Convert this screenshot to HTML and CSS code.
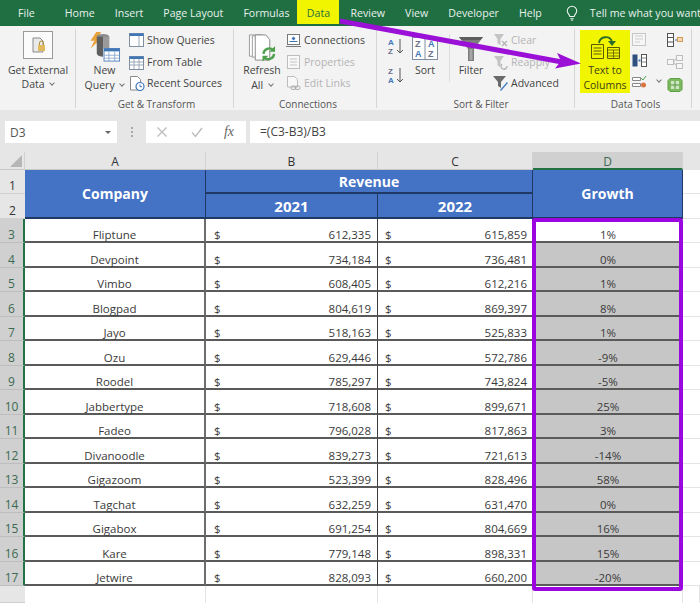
FILE: index.html
```html
<!DOCTYPE html>
<html lang="en">
<head>
<meta charset="utf-8">
<title>Text to Columns</title>
<link rel="stylesheet" href="styles.css">
</head>
<body>
<div class="app">
  <nav class="tabs">
    <span class="tab t-file">File</span>
    <span class="tab">Home</span>
    <span class="tab">Insert</span>
    <span class="tab">Page Layout</span>
    <span class="tab">Formulas</span>
    <span class="tab t-data">Data</span>
    <span class="tab">Review</span>
    <span class="tab">View</span>
    <span class="tab">Developer</span>
    <span class="tab">Help</span>
    <svg class="bulb" viewBox="0 0 14 18"><path d="M4.500 12.500C4 10 1.500 9 1.500 6a5.500 5.500 0 0 1 11 0c0 3-2.500 4-3 6.500zM5 15h4M6 17h2" fill="none" stroke="#f1f6f2" stroke-width="1.200"/></svg>
    <span class="tab t-tell">Tell me what you want</span>
  </nav>

  <section class="ribbon">
    <div class="group g1">
      <div class="body">
        <div class="big w76">
          <div class="ico">
            <svg class="i-ext" viewBox="0 0 30 28"><rect x=".5" y=".5" width="29" height="27" fill="#fbfbfb" stroke="#9a9a9a"/><path d="M10 7h7l3 3v11H10z" fill="#e9e9e9" stroke="#8a8a8a"/><rect x="15" y="14" width="7" height="6" fill="#e2b95b"/><path d="M16.500 14v-2a2 2 0 0 1 4 0v2" fill="none" stroke="#b08a36"/></svg>
          </div>
          <span>Get External</span>
          <span>Data <i class="chev"></i></span>
        </div>
      </div>
      <div class="label">&nbsp;</div>
    </div>

    <div class="group g2">
      <div class="body">
        <div class="big w49">
          <div class="ico">
            <svg class="i-query" viewBox="0 0 32 32"><path d="M7 0h5L8 7h4L1 17l4-8H1z" fill="#e8a33a"/><ellipse cx="14" cy="5" rx="6.500" ry="3" fill="#8b8b8b"/><path d="M7.500 5v17c0 2 3 3.500 6.500 3.500V5z" fill="#5f5f5f"/><path d="M14 5h6.500v12H14z" fill="#9a9a9a"/><rect x="15" y="17" width="16" height="13" fill="#fff" stroke="#5b86bd"/><path d="M15 17h16v3H15z" fill="#3f76b8"/><path d="M15 24h16M15 27h16M20 20v10M26 20v10" stroke="#7da0cb" stroke-width=".8"/></svg>
          </div>
          <span>New</span>
          <span>Query <i class="chev"></i></span>
        </div>
        <ul class="list">
          <li><svg viewBox="0 0 16 15"><rect x=".5" y=".5" width="14" height="13" fill="#fff" stroke="#7f8ea3"/><path d="M.5.500h14V3H.5z" fill="#3f76b8"/><path d="M10 3v10" stroke="#9aa7b6"/></svg>Show Queries</li>
          <li><svg viewBox="0 0 16 15"><rect x=".5" y="1.500" width="14" height="13" fill="#fff" stroke="#7f8ea3"/><path d="M.5 1.500h14V4H.5z" fill="#3f76b8"/><path d="M1 7h13M1 10h13M5 4v10M10 4v10" stroke="#9aa7b6"/></svg>From Table</li>
          <li><svg viewBox="0 0 16 15"><path d="M1.500.500h7l3 3V14h-10z" fill="#fff" stroke="#8a8a8a"/><circle cx="11" cy="10.500" r="4" fill="#fff" stroke="#3f76b8" stroke-width="1.200"/><path d="M11 8.500v2.200h2" fill="none" stroke="#3f76b8"/></svg>Recent Sources</li>
        </ul>
      </div>
      <div class="label">Get &amp; Transform</div>
    </div>

    <div class="group g3">
      <div class="body">
        <div class="big w44">
          <div class="ico">
            <svg class="i-refresh" viewBox="0 0 30 30"><path d="M1.500 1.500h13v22h-13z" fill="#fff" stroke="#9a9a9a"/><path d="M4.500 2.500h13v22h-13z" fill="#fff" stroke="#9a9a9a"/><path d="M7.500 1.500h11l4 5v21h-15z" fill="#fff" stroke="#8a8a8a"/><path d="M16 21a6 6 0 0 1 10-4M27 21a6 6 0 0 1-10 4" fill="none" stroke="#4ea04e" stroke-width="2.400"/><path d="M28 13v6h-6zM15 29v-6h6z" fill="#4ea04e"/></svg>
          </div>
          <span>Refresh</span>
          <span>All <i class="chev"></i></span>
        </div>
        <ul class="list">
          <li><svg viewBox="0 0 16 15"><rect x="1.500" y="1.500" width="12" height="10" fill="#fff" stroke="#777"/><path d="M0 13.500h15" stroke="#777"/><path d="M7.500 3.500l2 2-2 2-2-2z" fill="#3f76b8"/><path d="M3.500 8.500h8" stroke="#3f76b8"/></svg>Connections</li>
          <li class="off"><svg viewBox="0 0 16 15"><rect x="1.500" y=".5" width="12" height="13" fill="#f8f8f8" stroke="#bdbdbd"/><path d="M4 4h7M4 7h7M4 10h7" stroke="#c4c4c4"/></svg>Properties</li>
          <li class="off"><svg viewBox="0 0 16 15"><path d="M1.500.500h7l3 3V11h-10z" fill="#f8f8f8" stroke="#bdbdbd"/><rect x="5" y="10" width="5" height="3.500" rx="1.700" fill="none" stroke="#a9a9a9"/><rect x="9" y="10" width="5" height="3.500" rx="1.700" fill="none" stroke="#a9a9a9"/></svg>Edit Links</li>
        </ul>
      </div>
      <div class="label">Connections</div>
    </div>

    <div class="group g4">
      <div class="body">
        <div class="sorts">
          <svg viewBox="0 0 16 18"><text x="0" y="7" class="sa">A</text><text x="0" y="16" class="sz">Z</text><path d="M12 1v14M9 12l3 3 3-3" fill="none" stroke="#555"/></svg>
          <svg viewBox="0 0 16 18"><text x="0" y="7" class="sz">Z</text><text x="0" y="16" class="sa">A</text><path d="M12 1v14M9 12l3 3 3-3" fill="none" stroke="#555"/></svg>
        </div>
        <div class="big w34">
          <div class="ico">
            <svg class="i-sort" viewBox="0 0 26 24"><rect x=".5" y=".5" width="25" height="22" fill="#fff" stroke="#7f8ea3"/><path d="M13 .5v22" stroke="#7f8ea3"/><text x="3" y="10" class="sz2">Z</text><text x="3" y="20" class="sa2">A</text><text x="16" y="10" class="sa2">A</text><text x="16" y="20" class="sz2">Z</text></svg>
          </div>
          <span>Sort</span>
        </div>
        <div class="vsep"></div>
        <div class="big w36">
          <div class="ico">
            <svg class="i-filter" viewBox="0 0 24 24"><path d="M0 0h24l-9 12v12H9V12z" fill="#7d7d7d"/><path d="M0 0h24l-2.500 3h-19z" fill="#5d5d5d"/><path d="M10.500 12h3v11h-3z" fill="#a6a6a6"/></svg>
          </div>
          <span>Filter</span>
        </div>
        <ul class="list l4">
          <li class="off"><svg viewBox="0 0 16 15"><path d="M1 1h10L7.500 6v6l-3-1.500V6z" fill="#c4c4c4"/><path d="M9 8l5 5M14 8l-5 5" stroke="#b3b3b3" stroke-width="1.300"/></svg>Clear</li>
          <li class="off"><svg viewBox="0 0 16 15"><path d="M1 1h10L7.500 6v6l-3-1.500V6z" fill="#c4c4c4"/><path d="M9 9a3 3 0 1 0 5 2" fill="none" stroke="#b3b3b3" stroke-width="1.300"/></svg>Reapply</li>
          <li><svg viewBox="0 0 16 15"><path d="M0 0h13L8 6v6l-3-2V6z" fill="#6a6a6a"/><path d="M7 14l7-8 1 1-7 8z" fill="#3f7fc1"/></svg>Advanced</li>
        </ul>
      </div>
      <div class="label">Sort &amp; Filter</div>
    </div>

    <div class="group g5">
      <div class="body">
        <div class="big ttc">
          <div class="ico">
            <svg class="i-ttc" viewBox="0 0 30 25"><path d="M1.500 9.500h12v14h-12z" fill="none" stroke="#5c5a0a"/><path d="M3.500 13h8M3.500 16h8M3.500 19h8" stroke="#5c5a0a"/><path d="M17.500 12.500h12v11h-12z" fill="none" stroke="#5c5a0a"/><path d="M17.500 15h12M17.500 18h12M17.500 21h12M23.500 15v8" stroke="#5c5a0a" stroke-width=".8"/><path d="M9 8c1-7 11-8 13-1" fill="none" stroke="#2d6b2a" stroke-width="1.800"/><path d="M18 6h8l-4 5z" fill="#2d6b2a"/></svg>
          </div>
          <span>Text to</span>
          <span>Columns</span>
        </div>
        <div class="tools">
          <svg class="tool-a" viewBox="0 0 15 13"><rect x=".5" y=".5" width="13" height="12" fill="#f6f6f6" stroke="#c6c6c6"/><path d="M3 3h8M3 6h8M3 9h5" stroke="#cdcdcd"/></svg>
          <svg class="tool-a" viewBox="0 0 15 13"><rect x=".5" y=".5" width="5" height="12" fill="#2f4f7f"/><rect x="9.500" y=".5" width="5" height="12" fill="#fff" stroke="#555"/><path d="M6.500 6.500h2" stroke="#3f76b8" stroke-width="2"/><path d="M10 4h4M10 8h4" stroke="#888"/></svg>
          <div class="tool-row">
            <svg class="tool-a" viewBox="0 0 15 13"><path d="M.5 2.500h8v3h-8zM.5 8.500h8v3h-8z" fill="#fff" stroke="#888"/><path d="M9 3l2 2 3-4" fill="none" stroke="#4ea04e"/><circle cx="11.500" cy="10" r="2.500" fill="#d9743f"/></svg>
            <i class="chev"></i>
          </div>
        </div>
        <div class="tools t2">
          <svg class="tool-b" viewBox="0 0 16 14"><rect x=".5" y=".5" width="6" height="13" fill="#fff" stroke="#555"/><path d="M1 4.500h5M1 9h5" stroke="#555"/><path d="M8 7h2" stroke="#3f76b8"/><rect x="10.500" y="4.500" width="5" height="4" fill="#f4d9b5" stroke="#d29a55"/></svg>
          <svg class="tool-b" viewBox="0 0 16 14"><rect x=".5" y="4.500" width="6" height="5" fill="#f6f6f6" stroke="#bdbdbd"/><rect x="9.500" y=".5" width="6" height="5" fill="#f6f6f6" stroke="#bdbdbd"/><rect x="9.500" y="8.500" width="6" height="5" fill="#f6f6f6" stroke="#bdbdbd"/><path d="M6.500 7L9.500 3M6.500 7l3 4" stroke="#bdbdbd"/></svg>
          <svg class="tool-c" viewBox="0 0 16 16"><path d="M3 1.500h10l2 2v9l-2 2H3l-2-2v-9z" fill="#7cb95f" stroke="#5f9f47"/><path d="M4 4h8v8H4z" fill="#cfe7c0"/><path d="M8 4v8M4 8h8" stroke="#4f8f3f"/></svg>
        </div>
      </div>
      <div class="label">Data Tools</div>
    </div>
  </section>

  <div class="fbar">
    <div class="namebox"><span>D3</span><i class="caret"></i></div>
    <div class="dots"><b></b><b></b><b></b></div>
    <div class="fxbox">
      <svg viewBox="0 0 12 12"><path d="M1.500 1.500l9 9M10.500 1.500l-9 9" stroke="#bdbdbd" stroke-width="1.300"/></svg>
      <svg viewBox="0 0 12 12"><path d="M1 6.500l3.500 4L11 2" fill="none" stroke="#bdbdbd" stroke-width="1.400"/></svg>
      <em>fx</em>
    </div>
    <div class="formula">=(C3-B3)/B3</div>
  </div>

  <div class="sheet">
    <div class="hd corner"></div><div class="hd">A</div><div class="hd">B</div><div class="hd">C</div><div class="hd sel">D</div><div class="hd none"></div>

    <div class="rn">1</div>
    <div class="th company">Company</div>
    <div class="th revenue">Revenue</div>
    <div class="th growth">Growth</div>
    <div class="e"></div>
    <div class="rn">2</div>
    <div class="th y21">2021</div>
    <div class="th y22">2022</div>
    <div class="e"></div>

    <div class="rn s">3</div><div class="a">Fliptune</div><div class="n b"><span>$</span><span>612,335</span></div><div class="n"><span>$</span><span>615,859</span></div><div class="d first">1%</div><div class="e"></div>
    <div class="rn s">4</div><div class="a">Devpoint</div><div class="n b"><span>$</span><span>734,184</span></div><div class="n"><span>$</span><span>736,481</span></div><div class="d">0%</div><div class="e"></div>
    <div class="rn s">5</div><div class="a">Vimbo</div><div class="n b"><span>$</span><span>608,405</span></div><div class="n"><span>$</span><span>612,216</span></div><div class="d">1%</div><div class="e"></div>
    <div class="rn s">6</div><div class="a">Blogpad</div><div class="n b"><span>$</span><span>804,619</span></div><div class="n"><span>$</span><span>869,397</span></div><div class="d">8%</div><div class="e"></div>
    <div class="rn s">7</div><div class="a">Jayo</div><div class="n b"><span>$</span><span>518,163</span></div><div class="n"><span>$</span><span>525,833</span></div><div class="d">1%</div><div class="e"></div>
    <div class="rn s">8</div><div class="a">Ozu</div><div class="n b"><span>$</span><span>629,446</span></div><div class="n"><span>$</span><span>572,786</span></div><div class="d">-9%</div><div class="e"></div>
    <div class="rn s">9</div><div class="a">Roodel</div><div class="n b"><span>$</span><span>785,297</span></div><div class="n"><span>$</span><span>743,824</span></div><div class="d">-5%</div><div class="e"></div>
    <div class="rn s">10</div><div class="a">Jabbertype</div><div class="n b"><span>$</span><span>718,608</span></div><div class="n"><span>$</span><span>899,671</span></div><div class="d">25%</div><div class="e"></div>
    <div class="rn s">11</div><div class="a">Fadeo</div><div class="n b"><span>$</span><span>796,028</span></div><div class="n"><span>$</span><span>817,863</span></div><div class="d">3%</div><div class="e"></div>
    <div class="rn s">12</div><div class="a">Divanoodle</div><div class="n b"><span>$</span><span>839,273</span></div><div class="n"><span>$</span><span>721,613</span></div><div class="d">-14%</div><div class="e"></div>
    <div class="rn s">13</div><div class="a">Gigazoom</div><div class="n b"><span>$</span><span>523,399</span></div><div class="n"><span>$</span><span>828,496</span></div><div class="d">58%</div><div class="e"></div>
    <div class="rn s">14</div><div class="a">Tagchat</div><div class="n b"><span>$</span><span>632,259</span></div><div class="n"><span>$</span><span>631,470</span></div><div class="d">0%</div><div class="e"></div>
    <div class="rn s">15</div><div class="a">Gigabox</div><div class="n b"><span>$</span><span>691,254</span></div><div class="n"><span>$</span><span>804,669</span></div><div class="d">16%</div><div class="e"></div>
    <div class="rn s">16</div><div class="a">Kare</div><div class="n b"><span>$</span><span>779,148</span></div><div class="n"><span>$</span><span>898,331</span></div><div class="d">15%</div><div class="e"></div>
    <div class="rn s">17</div><div class="a">Jetwire</div><div class="n b"><span>$</span><span>828,093</span></div><div class="n"><span>$</span><span>660,200</span></div><div class="d">-20%</div><div class="e"></div>

    <div class="rn"></div><div class="z"></div><div class="z"></div><div class="z"></div><div class="z"></div><div class="z"></div>
    <div class="outline"></div>
  </div>

  <svg class="arrow" viewBox="0 0 700 603"><path d="M340 21L562 62" stroke="#9a10d6" stroke-width="5" fill="none"/><path d="M557 53L581 63.500 555 68.500 561 61z" fill="#9a10d6"/></svg>
</div>
</body>
</html>
```

FILE: styles.css
```css
* { box-sizing: border-box; }
html, body { margin: 0; padding: 0; }
body { font-family: "Open Sans", "Liberation Sans", sans-serif; color: #3a3a3a; background: #fff; }
.app { position: relative; width: 700px; height: 603px; overflow: hidden; display: flex; flex-direction: column; }

/* Tabs */
.tabs { height: 26px; flex: none; background: #1f6f43; display: flex; align-items: center; color: #e9f1ec; font-size: 10.600px; white-space: nowrap; overflow: hidden; }
.tab { margin-left: 20px; flex: none; }
.t-file { margin-left: 18px; margin-right: 10px; }
.t-data { margin-left: 8px; margin-right: -9px; width: 42px; height: 24px; margin-top: -2px; line-height: 26px; text-align: center; background: #f2f500; color: #1f6f43; }
.bulb { width: 12px; height: 17px; margin-left: 24px; flex: none; }
.t-tell { margin-left: 12px; }

/* Ribbon */
.ribbon { height: 84px; flex: none; background: #f3f3f3; display: flex; padding-top: 3px; font-size: 10.500px; line-height: 15px; }
.group { flex: none; display: flex; flex-direction: column; border-right: 1px solid #d6d6d6; margin-bottom: 2px; }
.g1 { width: 76px; }
.g2 { width: 158px; padding-left: 4px; }
.g3 { width: 143px; padding-left: 6px; }
.g4 { width: 198px; padding-left: 11px; }
.g5 { width: 117px; padding-left: 5px; }
.body { height: 68px; display: flex; }
.label { height: 11px; text-align: center; font-size: 10px; line-height: 15px; color: #555; }
.big { display: flex; flex-direction: column; align-items: center; flex: none; white-space: nowrap; color: #444; }
.ico { height: 34px; width: 100%; display: flex; justify-content: center; align-items: center; flex: none; }
.g1 .big { line-height: 14px; }
.w76 { width: 76px; }
.w49 { width: 49px; }
.w44 { width: 44px; }
.w34 { width: 34px; margin-left: 4px; }
.w36 { width: 36px; margin-left: 3px; }
.chev { display: inline-block; width: 4px; height: 4px; border-right: 1px solid #777; border-bottom: 1px solid #777; transform: rotate(45deg); margin: 0 0 3px 3px; }
.i-ext { width: 30px; height: 28px; margin-top: 2px; margin-bottom: 4px; }
.i-query { width: 32px; height: 31px; margin-top: 3px; }
.i-refresh { width: 29px; height: 30px; margin-top: 3px; }
.i-sort { width: 26px; height: 24px; margin-top: 5px; }
.i-filter { width: 24px; height: 24px; margin-top: 5px; }
.i-ttc { width: 30px; height: 25px; margin-top: 1px; }
.list { list-style: none; margin: 0; padding: 1px 0 0; display: flex; flex-direction: column; white-space: nowrap; color: #444; }
.list li { height: 21.500px; display: flex; align-items: center; }
.list svg { width: 16px; height: 15px; margin-right: 2px; flex: none; }
.list .off { color: #b4b4b4; }
.g3 .list { margin-left: 2px; }
.l4 { margin-left: 4px; }
.sorts { width: 16px; flex: none; display: flex; flex-direction: column; padding-top: 9px; gap: 11px; }
.sorts svg { width: 16px; height: 18px; }
.sa, .sa2 { font: 700 8px "Liberation Sans", sans-serif; fill: #3f76b8; }
.sz, .sz2 { font: 700 8px "Liberation Sans", sans-serif; fill: #6a6f8a; }
.sa2, .sz2 { font-size: 9px; }
.vsep { width: 1px; height: 48px; margin: 5px 0 0 7px; background: #dcdcdc; flex: none; }
.ttc { width: 50px; height: 63px; margin-top: 1px; background: #f2f500; color: #3f3f1a; }
.ttc .ico { height: 33px; }
.tools { width: 35px; flex: none; padding: 4px 0 0 2px; display: flex; flex-direction: column; gap: 8px; }
.t2 { width: 17px; }
.tool-a { width: 15px; height: 13px; display: block; }
.tool-b { width: 16px; height: 14px; display: block; }
.tool-c { width: 16px; height: 16px; display: block; }
.tool-row { display: flex; align-items: center; gap: 7px; }

/* Formula bar */
.fbar { height: 42px; flex: none; background: #e6e6e6; padding: 11px 0 9px 5px; display: flex; font-size: 12px; }
.namebox { width: 112px; background: #fff; display: flex; align-items: center; justify-content: space-between; padding: 0 6px 0 5px; color: #555; }
.caret { width: 0; height: 0; border: 3px solid transparent; border-top: 3px solid #666; border-bottom: 0; }
.dots { width: 29px; display: flex; flex-direction: column; align-items: center; justify-content: center; gap: 2px; }
.dots b { width: 2px; height: 2px; background: #aaa; }
.fxbox { width: 100px; background: #fff; display: flex; align-items: center; justify-content: space-between; padding: 0 12px 0 10px; }
.fxbox svg { width: 12px; height: 12px; }
.fxbox svg + svg { margin-left: 8px; }
.fxbox em { font: italic 14px "Liberation Serif", serif; color: #666; margin-left: 6px; }
.formula { flex: 1; margin-left: 4px; background: #fff; padding-left: 10px; line-height: 22px; color: #444; }

/* Sheet */
.sheet { position: relative; flex: 1; min-height: 0; background: #fff; display: grid; grid-template-columns: 25px 181px 172px 155px 150px 1fr; grid-template-rows: 18px 24px 25px repeat(15, 24.470px) 1fr; font-size: 11.500px; line-height: 12px; color: #3a3a3a; }
.hd { background: #e6e6e6; text-align: center; font-size: 12px; line-height: 20px; color: #333; border-right: 1px solid #d2d2d2; border-bottom: 1px solid #c8c8c8; }
.hd.sel { background: #d0d0d0; border-bottom: 2px solid #217346; color: #3c6a50; }
.hd.none { background: #e6e6e6; border: 0; }
.corner { position: relative; background: #e6e6e6; }
.corner::after { content: ""; position: absolute; right: 2px; bottom: 2px; border-style: solid; border-width: 0 0 12px 12px; border-color: transparent transparent #b6b6b6 transparent; }
.rn { background: #e6e6e6; text-align: center; font-size: 12px; line-height: 14px; display: flex; align-items: flex-end; justify-content: center; color: #333; border-bottom: 1px solid #d0d0d0; }
.rn.s { background: #d0d0d0; color: #3c6a50; border-right: 2px solid #217346; border-bottom-color: #bdbdbd; }
.th { background: #4472c4; color: #fff; font-weight: 700; font-size: 14px; line-height: 18px; padding-top: 1px; display: flex; align-items: center; justify-content: center; border-right: 1px solid #1f3864; border-bottom: 2px solid #1f3864; }
.company { grid-column: 2; grid-row: 2 / 4; }
.revenue { grid-column: 3 / 5; grid-row: 2; }
.growth { grid-column: 5; grid-row: 2 / 4; }
.y21 { grid-column: 3; grid-row: 3; font-size: 15px; }
.y22 { grid-column: 4; grid-row: 3; font-size: 15px; }
.a, .d { display: flex; align-items: flex-end; justify-content: center; border-bottom: 2px solid #5a5a5a; }
.a { border-right: 2px solid #6d6d6d; }
.n { display: flex; align-items: flex-end; justify-content: space-between; padding: 0 5px 0 7px; border-bottom: 2px solid #5a5a5a; border-right: 1px solid #3c3c3c; }
.b { padding: 0 6px 0 8px; }
.d { background: #c6c6c6; }
.d.first { background: #fff; }
.e { border-bottom: 1px solid #e4e4e4; }
.z { border-right: 1px solid #e4e4e4; }
.outline { position: absolute; left: 532px; top: 66px; width: 151px; height: 373px; border: 4px solid #9b05e0; border-radius: 3px; pointer-events: none; }

/* Annotation arrow */
.arrow { position: absolute; left: 0; top: 0; width: 700px; height: 603px; pointer-events: none; }
```
